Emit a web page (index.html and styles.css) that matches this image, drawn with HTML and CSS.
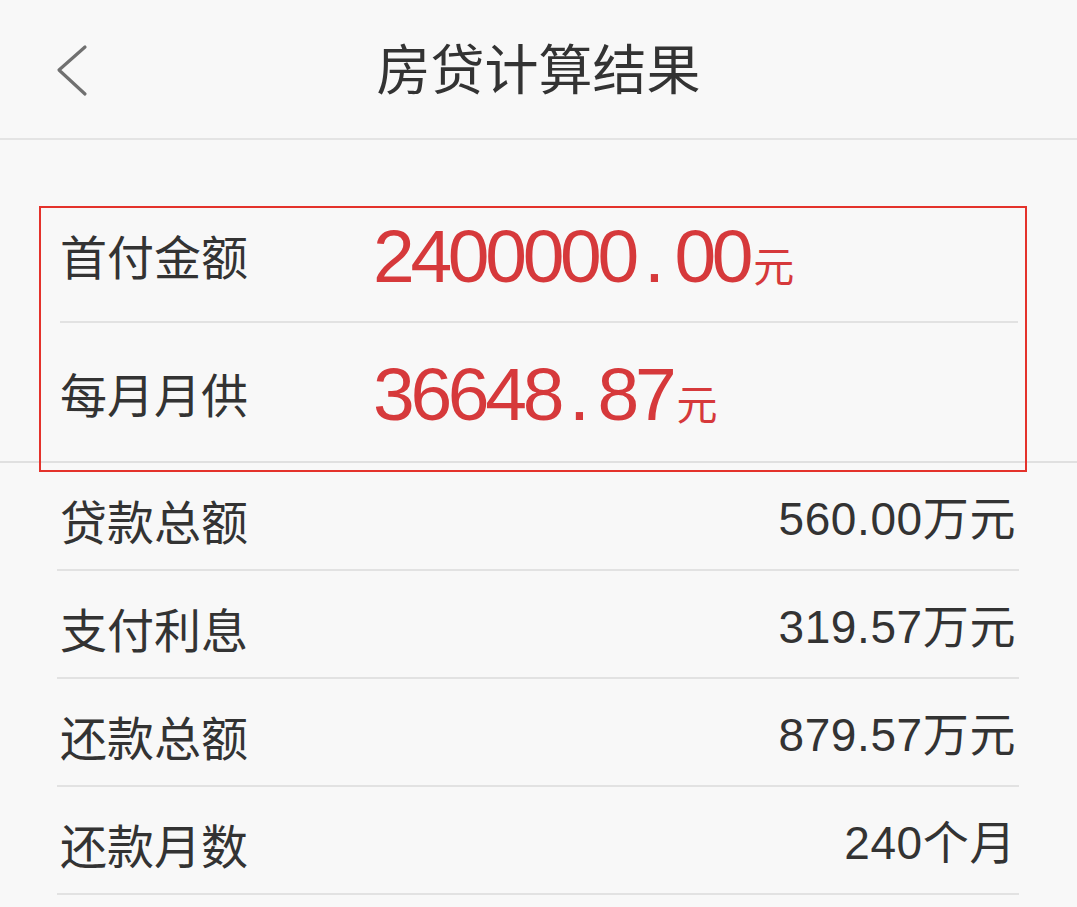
FILE: index.html
```html
<!DOCTYPE html>
<html lang="zh-CN">
<head>
<meta charset="utf-8">
<title>房贷计算结果</title>
<link rel="stylesheet" href="styles.css">
</head>
<body>
<div class="page">
  <header class="topbar">
    <svg class="back" width="40" height="60" viewBox="0 0 40 60">
      <polyline points="30,8 4,31 30,55" fill="none" stroke="#707070" stroke-width="3.2" stroke-linecap="round" stroke-linejoin="round"/>
    </svg>
    <h1 class="title">房贷计算结果</h1>
  </header>

  <section class="main">
    <div class="hrow first">
      <span class="label">首付金额</span>
      <span class="bignum">2400000<span class="dot">.</span>00<span class="unit">元</span></span>
    </div>
    <div class="hrow second">
      <span class="label">每月月供</span>
      <span class="bignum">36648<span class="dot dot2">.</span>87<span class="unit">元</span></span>
    </div>
    <div class="annot"></div>
  </section>

  <section class="list">
    <div class="row"><span class="label">贷款总额</span><span class="val">560.00万元</span></div>
    <div class="row"><span class="label">支付利息</span><span class="val">319.57万元</span></div>
    <div class="row"><span class="label">还款总额</span><span class="val">879.57万元</span></div>
    <div class="row"><span class="label">还款月数</span><span class="val">240个月</span></div>
  </section>
</div>
</body>
</html>
```

FILE: styles.css
```css
html, body {
  margin: 0;
  padding: 0;
  background: #f8f8f8;
}
body {
  width: 1077px;
  height: 907px;
  overflow: hidden;
  font-family: "Noto Sans CJK SC", "Noto Sans", sans-serif;
  color: #333;
}
.topbar {
  height: 138px;
  border-bottom: 2px solid #e4e4e4;
  display: flex;
  align-items: center;
  justify-content: center;
  position: relative;
}
.back {
  position: absolute;
  left: 55px;
  top: 39px;
}
.title {
  margin: 0;
  font-size: 54px;
  font-weight: 400;
  color: #333;
  letter-spacing: 0;
  position: relative;
  top: -3px;
}
.main {
  margin-top: 48px;
  position: relative;
  border-bottom: 2px solid #e0e0e0;
}
.hrow {
  display: flex;
  align-items: center;
  margin: 0 59px 0 60px;
}
.hrow.first {
  height: 133px;
  border-bottom: 2px solid #e2e2e2;
}
.hrow.second {
  height: 138px;
}
.label {
  font-size: 47px;
  line-height: 1;
  color: #333;
  letter-spacing: 0;
}
.hrow .label {
  width: 313px;
  flex: none;
}
.bignum {
  font-family: "Liberation Sans", "Noto Sans CJK SC", sans-serif;
  font-size: 75px;
  line-height: 1;
  color: #d6393b;
  letter-spacing: -4.3px;
  position: relative;
  top: 2px;
}
.dot {
  margin: 0 14px 0 9px;
}
.dot2 {
  margin: 0 12px 0 9px;
}
.unit {
  font-family: "Noto Sans CJK SC", sans-serif;
  font-size: 41px;
  letter-spacing: 0;
  margin-left: 4px;
}
.annot {
  position: absolute;
  left: 39px;
  top: 18px;
  width: 984px;
  height: 262px;
  border: 2px solid #e4322b;
  pointer-events: none;
}
.list {
  margin: 0 58px 0 57px;
}
.row {
  height: 106px;
  border-bottom: 2px solid #e2e2e2;
  display: flex;
  align-items: center;
  justify-content: space-between;
  padding: 0 3px;
}
.row .label {
  position: relative;
  top: 3px;
}
.val {
  font-family: "Liberation Sans", "Noto Sans CJK SC", sans-serif;
  font-size: 46px;
  line-height: 1;
  color: #333;
  position: relative;
  top: 3px;
  letter-spacing: 0.6px;
}
```
